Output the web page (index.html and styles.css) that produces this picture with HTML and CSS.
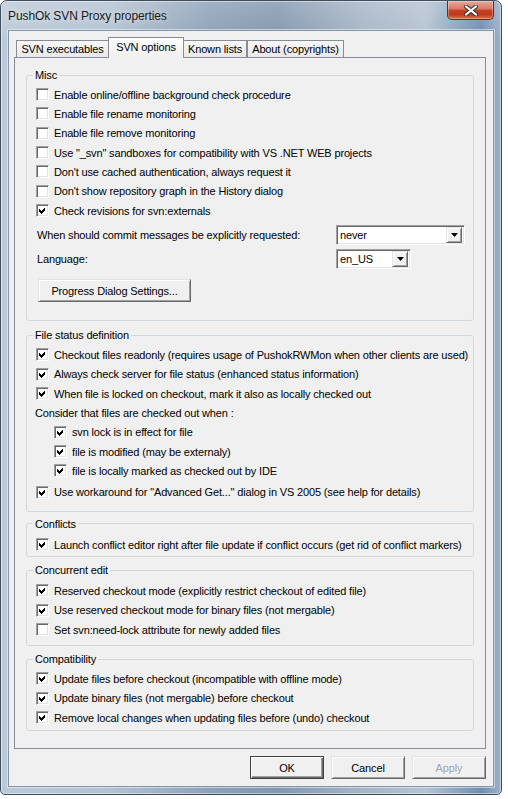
FILE: index.html
```html
<!DOCTYPE html>
<html>
<head>
<meta charset="utf-8">
<title>PushOk SVN Proxy properties</title>
<link rel="stylesheet" href="styles.css">
</head>
<body>
<div class="window">
  <div class="titlebar">
    <div class="title">PushOk SVN Proxy properties</div>
    <div class="close">
      <svg width="16" height="11" viewBox="0 0 16 11"><path d="M3 1.5 L13 9.5 M13 1.5 L3 9.5" stroke="#3a3a3a" stroke-width="4.2" stroke-linecap="round"/><path d="M3 1.5 L13 9.5 M13 1.5 L3 9.5" stroke="#ffffff" stroke-width="2.2" stroke-linecap="round"/></svg>
    </div>
  </div>
  <div class="client">
    <div class="tabs">
      <div class="tab t1">SVN executables</div>
      <div class="tab sel t2">SVN options</div>
      <div class="tab t3">Known lists</div>
      <div class="tab t4">About (copyrights)</div>
    </div>
    <div class="panel">
      <fieldset class="gb misc">
        <legend>Misc</legend>
        <div class="body">
          <div class="row"><span class="cb"></span>Enable online/offline background check procedure</div>
          <div class="row"><span class="cb"></span>Enable file rename monitoring</div>
          <div class="row"><span class="cb"></span>Enable file remove monitoring</div>
          <div class="row"><span class="cb"></span>Use "_svn" sandboxes for compatibility with VS .NET WEB projects</div>
          <div class="row"><span class="cb"></span>Don't use cached authentication, always request it</div>
          <div class="row"><span class="cb"></span>Don't show repository graph in the History dialog</div>
          <div class="row"><span class="cb on"><svg width="11" height="11" viewBox="0 0 11 11"><path d="M2 4 L4 6 L8 2 L8 5 L4 9 L2 7 Z" fill="#000"/></svg></span>Check revisions for svn:externals</div>
          <div class="field first"><span class="flabel">When should commit messages be explicitly requested:</span><div class="combo wide"><span class="ctext">never</span><span class="arrow"><svg width="7" height="4" viewBox="0 0 7 4"><path d="M0 0 H7 L3.5 4 Z" fill="#000"/></svg></span></div></div>
          <div class="field second"><span class="flabel">Language:</span><div class="combo narrow"><span class="ctext">en_US</span><span class="arrow"><svg width="7" height="4" viewBox="0 0 7 4"><path d="M0 0 H7 L3.5 4 Z" fill="#000"/></svg></span></div></div>
          <div class="btn progress">Progress Dialog Settings...</div>
        </div>
      </fieldset>

      <fieldset class="gb status">
        <legend>File status definition</legend>
        <div class="body">
          <div class="row"><span class="cb on"><svg width="11" height="11" viewBox="0 0 11 11"><path d="M2 4 L4 6 L8 2 L8 5 L4 9 L2 7 Z" fill="#000"/></svg></span>Checkout files readonly (requires usage of PushokRWMon when other clients are used)</div>
          <div class="row"><span class="cb on"><svg width="11" height="11" viewBox="0 0 11 11"><path d="M2 4 L4 6 L8 2 L8 5 L4 9 L2 7 Z" fill="#000"/></svg></span>Always check server for file status (enhanced status information)</div>
          <div class="row"><span class="cb on"><svg width="11" height="11" viewBox="0 0 11 11"><path d="M2 4 L4 6 L8 2 L8 5 L4 9 L2 7 Z" fill="#000"/></svg></span>When file is locked on checkout, mark it also as locally checked out</div>
          <div class="row plain">Consider that files are checked out when :</div>
          <div class="row indent"><span class="cb on"><svg width="11" height="11" viewBox="0 0 11 11"><path d="M2 4 L4 6 L8 2 L8 5 L4 9 L2 7 Z" fill="#000"/></svg></span>svn lock is in effect for file</div>
          <div class="row indent"><span class="cb on"><svg width="11" height="11" viewBox="0 0 11 11"><path d="M2 4 L4 6 L8 2 L8 5 L4 9 L2 7 Z" fill="#000"/></svg></span>file is modified (may be externaly)</div>
          <div class="row indent"><span class="cb on"><svg width="11" height="11" viewBox="0 0 11 11"><path d="M2 4 L4 6 L8 2 L8 5 L4 9 L2 7 Z" fill="#000"/></svg></span>file is locally marked as checked out by IDE</div>
          <div class="row gap"><span class="cb on"><svg width="11" height="11" viewBox="0 0 11 11"><path d="M2 4 L4 6 L8 2 L8 5 L4 9 L2 7 Z" fill="#000"/></svg></span>Use workaround for "Advanced Get..." dialog in VS 2005 (see help for details)</div>
        </div>
      </fieldset>

      <fieldset class="gb conflicts">
        <legend>Conflicts</legend>
        <div class="body">
          <div class="row"><span class="cb on"><svg width="11" height="11" viewBox="0 0 11 11"><path d="M2 4 L4 6 L8 2 L8 5 L4 9 L2 7 Z" fill="#000"/></svg></span>Launch conflict editor right after file update if conflict occurs (get rid of conflict markers)</div>
        </div>
      </fieldset>

      <fieldset class="gb concurrent">
        <legend>Concurrent edit</legend>
        <div class="body">
          <div class="row"><span class="cb on"><svg width="11" height="11" viewBox="0 0 11 11"><path d="M2 4 L4 6 L8 2 L8 5 L4 9 L2 7 Z" fill="#000"/></svg></span>Reserved checkout mode (explicitly restrict checkout of edited file)</div>
          <div class="row"><span class="cb on"><svg width="11" height="11" viewBox="0 0 11 11"><path d="M2 4 L4 6 L8 2 L8 5 L4 9 L2 7 Z" fill="#000"/></svg></span>Use reserved checkout mode for binary files (not mergable)</div>
          <div class="row"><span class="cb"></span>Set svn:need-lock attribute for newly added files</div>
        </div>
      </fieldset>

      <fieldset class="gb compat">
        <legend>Compatibility</legend>
        <div class="body">
          <div class="row"><span class="cb on"><svg width="11" height="11" viewBox="0 0 11 11"><path d="M2 4 L4 6 L8 2 L8 5 L4 9 L2 7 Z" fill="#000"/></svg></span>Update files before checkout (incompatible with offline mode)</div>
          <div class="row"><span class="cb on"><svg width="11" height="11" viewBox="0 0 11 11"><path d="M2 4 L4 6 L8 2 L8 5 L4 9 L2 7 Z" fill="#000"/></svg></span>Update binary files (not mergable) before checkout</div>
          <div class="row"><span class="cb on"><svg width="11" height="11" viewBox="0 0 11 11"><path d="M2 4 L4 6 L8 2 L8 5 L4 9 L2 7 Z" fill="#000"/></svg></span>Remove local changes when updating files before (undo) checkout</div>
        </div>
      </fieldset>
    </div>
    <div class="buttons">
      <div class="btn dlg default">OK</div>
      <div class="btn dlg">Cancel</div>
      <div class="btn dlg disabled">Apply</div>
    </div>
  </div>
</div>
</body>
</html>
```
FILE: styles.css
```css
* { box-sizing: border-box; }

body {
  margin: 0;
  background: #ffffff;
  font-family: "Liberation Sans", Arial, sans-serif;
  font-size: 11px;
  letter-spacing: -0.15px;
  color: #000;
}

.window {
  width: 502px;
  height: 795px;
  border: 1px solid #3f4d5f;
  border-radius: 7px 7px 5px 5px;
  padding: 0 7px 7px 7px;
  display: flex;
  flex-direction: column;
  background:
    linear-gradient(to bottom, rgba(255,255,255,0.18), rgba(255,255,255,0) 40px),
    linear-gradient(to right, #bccad8 0%, #b3c2d2 22%, #8ea1b7 42%, #8497ae 55%, #a6b5c6 72%, #b5c3d2 85%, #6f8db0 96%, #9db2c9 100%);
  box-shadow: inset 0 0 0 1px rgba(255,255,255,0.45);
}

.titlebar {
  height: 29px;
  display: flex;
  align-items: flex-start;
}

.title {
  font-family: "Liberation Sans", Arial, sans-serif;
  font-size: 12px;
  letter-spacing: -0.1px;
  line-height: 16px;
  padding-top: 7px;
  color: #1a1a1a;
  text-shadow: 0 0 6px rgba(255,255,255,0.8);
}

.close {
  margin-left: auto;
  width: 47px;
  height: 19px;
  border: 1px solid #6b2a22;
  border-top: none;
  border-radius: 0 0 5px 5px;
  background: linear-gradient(to bottom, #e9a99b 0%, #d87863 45%, #c5432c 50%, #c0391f 75%, #d8744a 100%);
  box-shadow: inset 0 0 0 1px rgba(255,255,255,0.3);
  display: flex;
  align-items: center;
  justify-content: center;
}

.client {
  flex: 1;
  border: 1px solid #8596aa;
  background: #f0f0f0;
  padding: 6px 7px 0 5px;
  display: flex;
  flex-direction: column;
  box-shadow: 0 0 0 1px rgba(240,245,250,0.55);
}

.tabs {
  display: flex;
  align-items: flex-end;
  height: 21px;
  margin: 0 0 -1px 2px;
  position: relative;
  z-index: 1;
}

.tab {
  height: 17px;
  margin-bottom: 1px;
  border: 1px solid #898c95;
  border-bottom: none;
  background: linear-gradient(to bottom, #f7f7f7, #e9e9e9);
  text-align: center;
  line-height: 16px;
  white-space: nowrap;
}

.tab.sel {
  height: 21px;
  margin-bottom: 0;
  background: linear-gradient(to bottom, #fdfdfd, #f0f0f0);
  line-height: 18px;
}

.t1 { width: 93px; }
.t2 { width: 76px; margin-left: -1px; }
.t3 { width: 64px; margin-left: -1px; }
.t4 { width: 97px; }

.panel {
  height: 692px;
  border: 1px solid #898c95;
  background: #f0f0f0;
  padding: 10px 11px 0 11px;
  display: flex;
  flex-direction: column;
}

.gb {
  border: 1px solid #d0d8de;
  border-radius: 3px;
  margin: 0;
  padding: 0;
  min-width: 0;
}

.gb legend {
  margin-left: 6px;
  padding: 0 2px;
  line-height: 14px;
  height: 14px;
}

.body { padding-left: 9px; }

.misc .body { padding-top: 3px; padding-bottom: 18px; }
.status { margin-top: 7px; }
.status .body { padding-top: 3px; padding-bottom: 9px; }
.conflicts { margin-top: 5px; }
.conflicts .body { padding-top: 4px; padding-bottom: 2px; }
.concurrent { margin-top: 6px; }
.concurrent .body { padding-top: 4px; padding-bottom: 6px; }
.compat { margin-top: 6px; }
.compat .body { padding-top: 3px; padding-bottom: 3px; }

.row {
  display: flex;
  align-items: center;
  height: 19.33px;
  white-space: nowrap;
}

.row.plain { padding-left: 0; margin-left: -1px; }
.row.indent { padding-left: 18px; }
.row.gap { margin-top: 2px; }

.cb {
  width: 13px;
  height: 13px;
  flex: none;
  margin-right: 5px;
  background: #fff;
  border: 1px solid;
  border-color: #a0a0a0 #ffffff #ffffff #a0a0a0;
  box-shadow: inset 1px 1px 0 #696969, inset -1px -1px 0 #e3e3e3;
  display: flex;
  align-items: center;
  justify-content: center;
}

.cb svg { display: block; shape-rendering: crispEdges; }

.field {
  display: flex;
  align-items: center;
  height: 20px;
}

.field.first { margin-top: 5px; }
.field.second { margin-top: 4px; }

.flabel {
  width: 300px;
  padding-left: 1px;
  white-space: nowrap;
}

.combo {
  height: 20px;
  background: #fff;
  border: 1px solid;
  border-color: #a0a0a0 #ffffff #ffffff #a0a0a0;
  box-shadow: inset 1px 1px 0 #696969, inset -1px -1px 0 #e3e3e3;
  padding: 2px 2px 2px 3px;
  display: flex;
  align-items: center;
}

.combo.wide { width: 129px; }
.combo.narrow { width: 75px; }

.ctext { flex: 1; line-height: 14px; }

.arrow {
  width: 16px;
  height: 16px;
  flex: none;
  background: #f0f0f0;
  border: 1px solid;
  border-color: #e3e3e3 #696969 #696969 #e3e3e3;
  box-shadow: inset 1px 1px 0 #ffffff, inset -1px -1px 0 #a0a0a0;
  display: flex;
  align-items: center;
  justify-content: center;
}

.arrow svg { display: block; }

.btn {
  height: 23px;
  display: flex;
  align-items: center;
  justify-content: center;
  background: #f0f0f0;
  border: 1px solid;
  border-color: #e3e3e3 #696969 #696969 #e3e3e3;
  box-shadow: inset 1px 1px 0 #ffffff, inset -1px -1px 0 #a0a0a0;
  white-space: nowrap;
}

.btn.progress {
  width: 153px;
  margin-top: 10px;
  margin-left: 2px;
}

.buttons {
  display: flex;
  justify-content: flex-end;
  gap: 7px;
  margin-top: 7px;
}

.btn.dlg { width: 74px; }

.btn.default {
  border-color: #404040;
  box-shadow: inset 1px 1px 0 #ffffff, inset -1px -1px 0 #696969, inset -2px -2px 0 #a0a0a0;
}

.btn.disabled {
  color: #a0a0a0;
  text-shadow: 1px 1px 0 #ffffff;
}
```
